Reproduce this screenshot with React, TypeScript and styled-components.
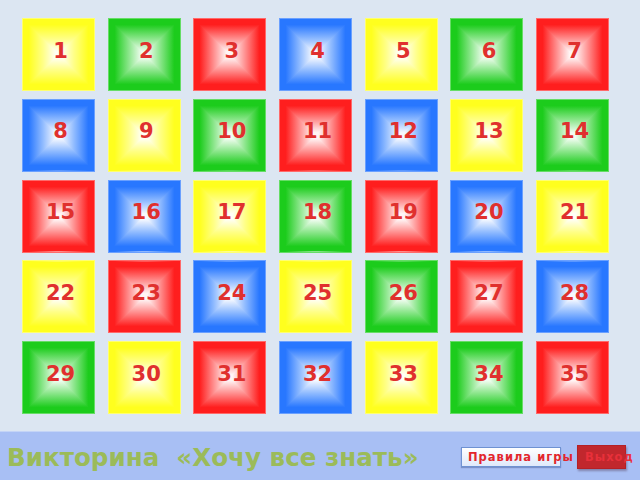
import styled, { createGlobalStyle } from 'styled-components';

const GlobalStyle = createGlobalStyle`
    html, body {
        margin: 0;
        padding: 0;
    }
    body {
        font-family: 'DejaVu Sans', sans-serif;
        background: #dce6f2;
    }
`;

type Tone = 'y' | 'g' | 'r' | 'b';

const palette: Record<Tone, { edge: string; mid: string; center: string; rim: string }> = {
    y: { edge: '#ffff1e', mid: '#ffff86', center: '#fffff6', rim: '#ffff70' },
    g: { edge: '#1ccc1c', mid: '#8ce68c', center: '#f2fdf2', rim: '#66dd66' },
    r: { edge: '#ff1e1e', mid: '#ff9090', center: '#fff6f6', rim: '#ff6a6a' },
    b: { edge: '#2877ff', mid: '#90bbff', center: '#f6f9ff', rim: '#6aa0ff' },
};

const ramp = (dir: string, t: Tone) => {
    const p = palette[t];
    return `linear-gradient(${dir}, ${p.edge} 0%, ${p.edge} 8%, ${p.mid} 28%, ${p.center} 46%, ${p.center} 54%, ${p.mid} 72%, ${p.edge} 92%, ${p.edge} 100%)`;
};

const Page = styled.div`
    width: 640px;
    height: 480px;
    display: flex;
    flex-direction: column;
    overflow: hidden;
`;

const Board = styled.main`
    flex: 1;
    display: grid;
    grid-template-columns: repeat(7, 73px);
    grid-auto-rows: 73px;
    column-gap: 12.7px;
    row-gap: 7.75px;
    padding: 18px 0 0 22px;
    align-content: start;
`;

const Tile = styled.button<{ $tone: Tone }>`
    position: relative;
    box-sizing: border-box;
    width: 73px;
    height: 73px;
    padding: 0 0 8px 4px;
    border: 1px solid ${({ $tone }) => palette[$tone].rim};
    background: ${({ $tone }) => ramp('to right', $tone)};
    display: flex;
    align-items: center;
    justify-content: center;
    cursor: pointer;
    &::before {
        content: '';
        position: absolute;
        inset: 0;
        background: ${({ $tone }) => ramp('to bottom', $tone)};
        clip-path: polygon(0 0, 100% 0, 50% 50%, 100% 100%, 0 100%, 50% 50%);
    }
`;

const Num = styled.span`
    position: relative;
    font-family: 'DejaVu Sans', sans-serif;
    font-weight: bold;
    font-size: 21px;
    color: #e0302e;
`;

const Footer = styled.footer`
    height: 49px;
    box-sizing: border-box;
    background: #a8bff4;
    border-top: 1px solid #c4d4f6;
    display: flex;
    align-items: center;
    padding: 2px 0 0 7px;
`;

const Title = styled.h1`
    margin: 0;
    flex: 1;
    font-family: 'DejaVu Sans', sans-serif;
    font-weight: bold;
    font-size: 24.6px;
    color: #9bbb59;
    white-space: pre;
`;

const Buttons = styled.div`
    display: flex;
    align-items: center;
    gap: 16px;
    margin-right: 14px;
`;

const RulesButton = styled.button`
    width: 100px;
    height: 20px;
    box-sizing: border-box;
    padding: 0 0 0 6px;
    border: 1px solid #6f92d2;
    background: linear-gradient(to bottom, #ffffff, #dfe9fb);
    box-shadow: 0 1px 1px rgba(40, 60, 120, 0.35);
    text-align: left;
    white-space: nowrap;
    overflow: visible;
    font-family: 'DejaVu Sans', sans-serif;
    font-weight: bold;
    font-size: 11.5px;
    letter-spacing: 1px;
    color: #e3262c;
`;

const ExitButton = styled.button`
    width: 49px;
    height: 24px;
    box-sizing: border-box;
    padding: 0 0 0 7px;
    border: 1px solid #b42026;
    background: #c1272d;
    box-shadow: 1px 2px 2px rgba(60, 20, 40, 0.35);
    text-align: left;
    white-space: nowrap;
    overflow: visible;
    font-family: 'DejaVu Sans', sans-serif;
    font-weight: bold;
    font-size: 11.5px;
    letter-spacing: 1px;
    color: #e8303a;
`;

const tones: Tone[] = [
    'y', 'g', 'r', 'b', 'y', 'g', 'r',
    'b', 'y', 'g', 'r', 'b', 'y', 'g',
    'r', 'b', 'y', 'g', 'r', 'b', 'y',
    'y', 'r', 'b', 'y', 'g', 'r', 'b',
    'g', 'y', 'r', 'b', 'y', 'g', 'r',
];

export default function App() {
    return (
        <Page>
            <GlobalStyle />
            <Board>
                {tones.map((t, i) => (
                    <Tile key={i} $tone={t}>
                        <Num>{i + 1}</Num>
                    </Tile>
                ))}
            </Board>
            <Footer>
                <Title>{'Викторина  «Хочу все знать»'}</Title>
                <Buttons>
                    <RulesButton>Правила игры</RulesButton>
                    <ExitButton>Выход</ExitButton>
                </Buttons>
            </Footer>
        </Page>
    );
}
